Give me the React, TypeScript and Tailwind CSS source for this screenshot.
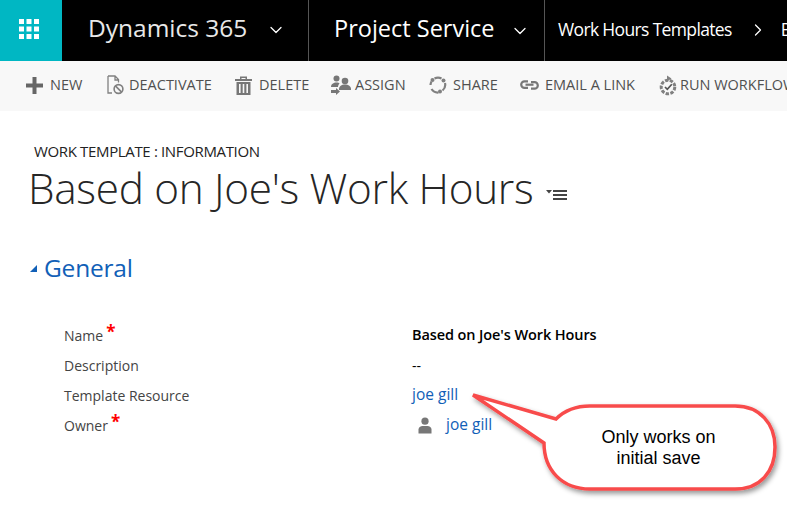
import React from 'react';
import { ChevronDown, ChevronRight } from 'lucide-react';

const font = "font-['Open_Sans','Noto_Sans',sans-serif]";

function GridIcon() {
  return (
    <svg width="20" height="20" viewBox="0 0 20 20" fill="#fff">
      {[0, 7.5, 15].map((y) =>
        [0, 7.5, 15].map((x) => <rect key={`${x}-${y}`} x={x} y={y} width="5" height="5" />)
      )}
    </svg>
  );
}

function PlusIcon() {
  return (
    <svg width="17" height="17" viewBox="0 0 17 17" fill="#666">
      <rect x="6.5" y="0" width="4" height="17" />
      <rect x="0" y="6.5" width="17" height="4" />
    </svg>
  );
}

function DeactivateIcon() {
  return (
    <svg width="17" height="20" viewBox="0 0 17 20" fill="none" stroke="#808080" strokeWidth="1.3">
      <path d="M1 1h7l3.5 3.5v3M8 1v4h3.5M1 1v17h4" />
      <circle cx="11.5" cy="14" r="4.4" strokeWidth="1.6" />
      <path d="M8.4 10.9l6.2 6.2" strokeWidth="1.6" />
    </svg>
  );
}

function TrashIcon() {
  return (
    <svg width="17" height="19" viewBox="0 0 17 19" fill="#777">
      <path d="M0 3h17v2H0zM5 0.5h7V3h-1.5V2h-4v1H5z" />
      <path d="M1.5 6h14v13h-14zM4 8v9h1.6V8zM7.7 8v9h1.6V8zM11.4 8v9H13V8z" fillRule="evenodd" />
    </svg>
  );
}

function AssignIcon() {
  return (
    <svg width="21" height="21" viewBox="0 0 21 21" fill="#777">
      <circle cx="6.5" cy="3.5" r="3" />
      <circle cx="15" cy="6" r="3.3" />
      <path d="M1 12c0-3 2.5-4.5 5.5-4.5 1.5 0 2.5.4 3 1-1 1-1.5 2.2-1.5 3.5z" />
      <path d="M9 14c0-2.5 2.5-4.5 6-4.500s6 2 6 4.500v1H9z" />
      <path d="M1 15h5v-2l4 3.5-4 3.500v-2H1z" />
    </svg>
  );
}

function ShareIcon() {
  return (
    <svg width="18" height="18" viewBox="0 0 18 18" fill="none" stroke="#808080" strokeWidth="2.2">
      <path d="M5.5 2.500a7.500 7.500 0 0 1 7 0M16 7a7.500 7.500 0 0 1-2.500 7.500M9.500 16.500A7.500 7.500 0 0 1 2.500 13M1.500 9a7.500 7.500 0 0 1 1-3.500" />
      <circle cx="3.5" cy="4" r="2" fill="#808080" stroke="none" />
      <circle cx="14.5" cy="4.500" r="2" fill="#808080" stroke="none" />
      <circle cx="11" cy="15.500" r="2" fill="#808080" stroke="none" />
    </svg>
  );
}

function LinkIcon() {
  return (
    <svg width="19" height="10" viewBox="0 0 19 10" fill="none" stroke="#777" strokeWidth="2.2">
      <path d="M8 1.300H4.500a3.300 3.300 0 0 0 0 6.600H8" />
      <path d="M11 2.100h3.500a3.300 3.300 0 0 1 0 6.600H11" />
      <path d="M5.500 4.700h8" />
    </svg>
  );
}

function WorkflowIcon() {
  return (
    <svg width="18" height="21" viewBox="0 0 18 21" fill="none" stroke="#808080">
      <circle cx="9" cy="12" r="6.800" strokeWidth="3" strokeDasharray="3.400 1.400" />
      <path d="M6 12l2.300 2.300L12.800 9.300" strokeWidth="1.700" stroke="#555" />
      <path d="M8 0.500l4.500 3-4.500 3z" fill="#808080" stroke="none" />
    </svg>
  );
}

function PersonIcon() {
  return (
    <svg width="14" height="17" viewBox="0 0 14 17" fill="#777">
      <circle cx="7" cy="4.200" r="3.600" />
      <path d="M0.500 16.500v-4c0-2.200 2-3.600 4-3.600h5c2 0 4 1.400 4 3.600v4z" />
    </svg>
  );
}

function Star() {
  return <span className="text-[#f00] text-[17px] font-bold leading-none relative -top-[4px] ml-[3px]">*</span>;
}

function Toolbar({ icon, label, gap }: { icon: React.ReactNode; label: string; gap: string }) {
  return (
    <div className={`flex items-center shrink-0 ${gap}`}>
      {icon}
      <span className="text-[14.5px] text-[#505050] whitespace-nowrap">{label}</span>
    </div>
  );
}

function Row({ label, star, children }: { label: string; star?: boolean; children: React.ReactNode }) {
  return (
    <div className="flex h-[30px] items-center">
      <div className="w-[348px] text-[14px] text-[#444] flex items-center">
        {label}
        {star && <Star />}
      </div>
      {children}
    </div>
  );
}

export default function App() {
  return (
    <div className={`relative w-[787px] h-[532px] overflow-hidden bg-white ${font}`}>
      {/* top nav */}
      <div className="flex h-[61px] bg-black text-white">
        <div className="w-[62px] bg-[#00b7c3] flex items-center justify-center shrink-0 pr-[4px] pb-[3px]">
          <GridIcon />
        </div>
        <div className="w-[247px] shrink-0 flex items-center pl-[26px] pb-[4px] border-r border-[#555]">
          <span className="text-[24.5px] text-[#e8e8e8] whitespace-nowrap">Dynamics 365</span>
          <ChevronDown size={20} strokeWidth={1.5} className="ml-[19px] mt-[2px]" />
        </div>
        <div className="w-[236px] shrink-0 flex items-center pl-[25px] pb-[4px] border-r border-[#555]">
          <span className="text-[23.5px] whitespace-nowrap">Project Service</span>
          <ChevronDown size={20} strokeWidth={1.5} className="ml-[15px] mt-[4px]" />
        </div>
        <div className="flex items-center pl-[13px] pb-[2px] overflow-hidden">
          <span className="text-[17.5px] whitespace-nowrap tracking-[-0.65px]">Work Hours Templates</span>
          <ChevronRight size={20} strokeWidth={1.5} className="ml-[16px] shrink-0" />
          <span className="text-[17.5px] ml-[13px]">B</span>
        </div>
      </div>

      {/* command bar */}
      <div className="flex h-[50px] items-center bg-[#f8f8f8] pl-[26px] pb-[2px] overflow-hidden">
        <Toolbar icon={<PlusIcon />} label="NEW" gap="gap-[7px] w-[81px]" />
        <Toolbar icon={<DeactivateIcon />} label="DEACTIVATE" gap="gap-[5px] w-[128px]" />
        <Toolbar icon={<TrashIcon />} label="DELETE" gap="gap-[7px] w-[95px]" />
        <Toolbar icon={<AssignIcon />} label="ASSIGN" gap="gap-[4px] w-[99px]" />
        <Toolbar icon={<ShareIcon />} label="SHARE" gap="gap-[6px] w-[91px]" />
        <Toolbar icon={<LinkIcon />} label="EMAIL A LINK" gap="gap-[6px] w-[139px]" />
        <Toolbar icon={<WorkflowIcon />} label="RUN WORKFLOW" gap="gap-[3px]" />
      </div>

      {/* form header */}
      <div className="pl-[29px] pt-[30px]">
        <div className="pl-[5px] text-[15px] leading-[20px] text-[#222] tracking-[-0.35px]">WORK TEMPLATE : INFORMATION</div>
        <div className="flex items-center h-[50px] mt-[2px] -ml-[1px]">
          <span className="text-[42.3px] font-light text-[#262626] whitespace-nowrap leading-[50px] -tracking-[0.3px]">
            Based on Joe's Work Hours
          </span>
          <svg width="21" height="14" viewBox="0 0 21 14" className="ml-[13px] mt-[14px]" fill="#444">
            <path d="M0 2h6L3 5.500z" />
            <rect x="7" y="2" width="14" height="2" />
            <rect x="7" y="6" width="14" height="2" />
            <rect x="7" y="10" width="14" height="2" />
          </svg>
        </div>

        {/* section */}
        <div className="flex items-center mt-[38px] h-[34px]">
          <svg width="9" height="9" viewBox="0 0 9 9" fill="#1160b7" className="mr-[6px]">
            <path d="M8 1v7H1z" />
          </svg>
          <span className="text-[24.5px] text-[#1160b7] tracking-[-0.2px]">General</span>
        </div>

        {/* fields */}
        <div className="pl-[35px] mt-[35px]">
          <Row label="Name" star>
            <span className="text-[14.5px] font-semibold text-black tracking-[-0.1px]">Based on Joe's Work Hours</span>
          </Row>
          <Row label="Description">
            <span className="text-[14px] text-black">--</span>
          </Row>
          <Row label="Template Resource">
            <span className="text-[15.5px] text-[#1160b7]">joe gill</span>
          </Row>
          <Row label="Owner" star>
            <div className="flex items-center pl-[6px] gap-[14px]">
              <PersonIcon />
              <span className="text-[15.5px] text-[#1160b7]">joe gill</span>
            </div>
          </Row>
        </div>
      </div>

      {/* annotation callout */}
      <svg width="787" height="532" viewBox="0 0 787 532" className="absolute left-0 top-0 pointer-events-none">
        <defs>
          <filter id="sh" x="-20%" y="-20%" width="140%" height="140%">
            <feDropShadow dx="2" dy="3" stdDeviation="2.500" floodColor="#000" floodOpacity="0.4" />
          </filter>
        </defs>
        <path
          d="M473 395 L556 419 C564 411 574 406 590 406 H735 C760 406 775 424 775 447 C775 472 760 489 735 489 H590 C562 489 544 470 544 443 Z"
          fill="#fff"
          stroke="#f84c4c"
          strokeWidth="3.500"
          strokeLinejoin="miter"
          filter="url(#sh)"
        />
      </svg>
      <div className="absolute left-[544px] top-[427px] w-[229px] text-center text-[18px] leading-[21px] text-black font-['Liberation_Sans',sans-serif]">
        Only works on
        <br />
        initial save
      </div>
    </div>
  );
}
